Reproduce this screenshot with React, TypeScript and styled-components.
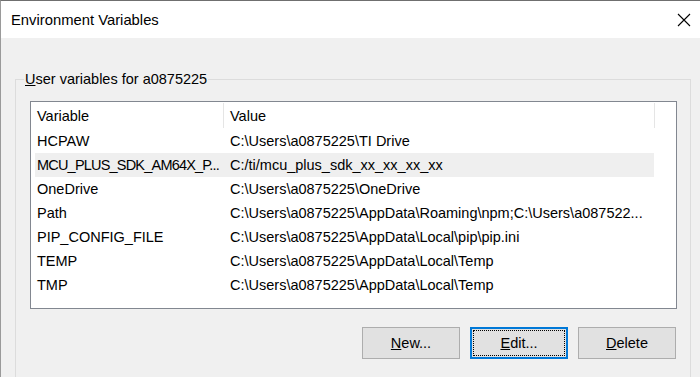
import React from "react";
import styled, {createGlobalStyle, css} from "styled-components";

const GlobalStyle = createGlobalStyle`
  html, body {
    margin: 0;
    padding: 0;
    background: #f0f0f0;
  }

  body {
    font-family: "Liberation Sans", Arial, sans-serif;
    font-size: 14.5px;
    color: #000;
  }
`;

const StyledWindow = styled.div`
  width: 700px;
  height: 377px;
  box-sizing: border-box;
  border-top: 1px solid #6f6f6f;
  border-left: 1px solid #9a9a9a;
  background: #f0f0f0;
  overflow: hidden;
  display: flex;
  flex-direction: column;
`;

const StyledTitleBar = styled.div`
  height: 37px;
  flex-shrink: 0;
  background: #fff;
  display: flex;
  align-items: center;
  justify-content: space-between;
  padding: 0 9px 0 10px;
`;

const StyledTitle = styled.span`
  font-size: 14.8px;
  padding-top: 1px;
`;

const StyledBody = styled.div`
  padding: 31px 9px 0 14px;
`;

const StyledGroup = styled.fieldset`
  margin: 0;
  padding: 12px 13px 0 8px;
  border: 1px solid #dcdcdc;
  height: 330px;
  box-sizing: border-box;
`;

const StyledLegend = styled.legend`
  padding: 0 1px;
  line-height: 20px;
  margin-top: 1px;
`;

const StyledListBox = styled.div`
  margin-left: 6px;
  height: 208px;
  box-sizing: border-box;
  border: 1px solid #828790;
  background: #fff;
`;

const StyledHeader = styled.div`
  display: flex;
  height: 27px;
`;

const StyledHeaderCell = styled.div<{ $width: number }>`
  width: ${({$width}) => $width}px;
  box-sizing: border-box;
  padding-left: 6px;
  display: flex;
  align-items: center;
  border-right: 1px solid #e5e5e5;
  margin: 1px 0 1px 0;
`;

const StyledRows = styled.div`
  padding-left: 4px;
`;

const StyledRow = styled.div<{ $hovered?: boolean }>`
  display: grid;
  grid-template-columns: 195px 1fr;
  width: 619px;
  height: 24px;
  align-items: center;
  ${({$hovered}) => $hovered && css`
    background: #efefef;
  `}
`;

const StyledCell = styled.span<{ $first?: boolean; $tight?: boolean }>`
  padding-left: ${({$first}) => $first ? "2px" : "0"};
  letter-spacing: ${({$tight}) => $tight ? "-0.8px" : "normal"};
  white-space: nowrap;
  overflow: hidden;
`;

const StyledButtonBar = styled.div`
  display: flex;
  justify-content: flex-end;
  gap: 10px;
  margin-top: 18px;
  padding-right: 1px;
`;

const StyledButton = styled.button<{ $focused?: boolean }>`
  width: 98px;
  height: 32px;
  box-sizing: border-box;
  background: #e1e1e1;
  border: 1px solid #adadad;
  font-family: inherit;
  font-size: 14.5px;
  color: #000;
  padding: 0;
  ${({$focused}) => $focused && css`
    border: 2px solid #0078d7;
    outline: 1px dotted #000;
    outline-offset: -4px;
  `}
`;

const CloseIcon = () => (
    <svg width="14" height="14" viewBox="0 0 14 14">
        <path d="M1 1 L13 13 M13 1 L1 13" stroke="#000" strokeWidth="1.1" fill="none"/>
    </svg>
);

const variables = [
    {name: "HCPAW", value: "C:\\Users\\a0875225\\TI Drive"},
    {name: "MCU_PLUS_SDK_AM64X_P...", value: "C:/ti/mcu_plus_sdk_xx_xx_xx_xx", hovered: true, tight: true},
    {name: "OneDrive", value: "C:\\Users\\a0875225\\OneDrive"},
    {name: "Path", value: "C:\\Users\\a0875225\\AppData\\Roaming\\npm;C:\\Users\\a087522..."},
    {name: "PIP_CONFIG_FILE", value: "C:\\Users\\a0875225\\AppData\\Local\\pip\\pip.ini"},
    {name: "TEMP", value: "C:\\Users\\a0875225\\AppData\\Local\\Temp"},
    {name: "TMP", value: "C:\\Users\\a0875225\\AppData\\Local\\Temp"},
];

const App: React.FC = () => {
    return <>
        <GlobalStyle/>
        <StyledWindow>
            <StyledTitleBar>
                <StyledTitle>Environment Variables</StyledTitle>
                <CloseIcon/>
            </StyledTitleBar>
            <StyledBody>
                <StyledGroup>
                    <StyledLegend><u>U</u>ser variables for a0875225</StyledLegend>
                    <StyledListBox>
                        <StyledHeader>
                            <StyledHeaderCell $width={193}>Variable</StyledHeaderCell>
                            <StyledHeaderCell $width={431}>Value</StyledHeaderCell>
                        </StyledHeader>
                        <StyledRows>
                            {variables.map((variable) => (
                                <StyledRow key={variable.name} $hovered={variable.hovered}>
                                    <StyledCell $first $tight={variable.tight}>{variable.name}</StyledCell>
                                    <StyledCell>{variable.value}</StyledCell>
                                </StyledRow>
                            ))}
                        </StyledRows>
                    </StyledListBox>
                    <StyledButtonBar>
                        <StyledButton><u>N</u>ew...</StyledButton>
                        <StyledButton $focused><u>E</u>dit...</StyledButton>
                        <StyledButton><u>D</u>elete</StyledButton>
                    </StyledButtonBar>
                </StyledGroup>
            </StyledBody>
        </StyledWindow>
    </>
}

export default App;
